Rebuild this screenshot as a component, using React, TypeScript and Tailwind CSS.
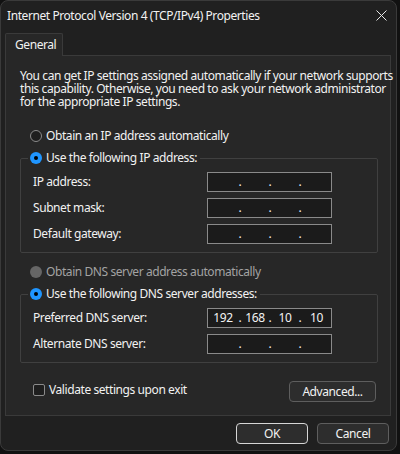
import type { ReactNode } from "react";

const font = { fontFamily: '"Noto Sans", "Segoe UI", sans-serif', letterSpacing: "-0.42px" };

type Segments = [string, string, string, string];

const IpField = ({ value = ["", "", "", ""] }: { value?: Segments }) => (
  <div className="flex h-[20px] w-[125px] items-center border border-[#8a8a8a] bg-[#1b1b1b] text-[12px] leading-none text-[#f2f2f2]">
    <span className="w-[30px] text-center">{value[0]}</span>
    <span className="w-[4px] text-center">.</span>
    <span className="w-[26px] text-center">{value[1]}</span>
    <span className="w-[4px] text-center">.</span>
    <span className="w-[26px] text-center">{value[2]}</span>
    <span className="w-[4px] text-center">.</span>
    <span className="flex-1 text-center">{value[3]}</span>
  </div>
);

const Row = ({ label, value }: { label: string; value?: Segments }) => (
  <div className="flex h-[20px] items-center">
    <span className="w-[186px] pl-[12px]">{label}</span>
    <IpField value={value} />
  </div>
);

type RadioState = "on" | "off" | "disabled";

const Radio = ({ state, children }: { state: RadioState; children: ReactNode }) => (
  <span className="flex h-[14px] items-center gap-[4px]">
    {state === "on" && (
      <span className="flex h-[12px] w-[12px] items-center justify-center rounded-full bg-[#1f95ff]">
        <span className="h-[4px] w-[4px] rounded-full bg-black" />
      </span>
    )}
    {state === "off" && (
      <span className="h-[12px] w-[12px] rounded-full border border-[#8a8a8a] bg-[#1e1e1e]" />
    )}
    {state === "disabled" && <span className="h-[12px] w-[12px] rounded-full bg-[#666666]" />}
    <span className={state === "disabled" ? "text-[#a3a3a3]" : "text-[#f2f2f2]"}>{children}</span>
  </span>
);

const Group = ({ legend, children }: { legend: ReactNode; children: ReactNode }) => (
  <fieldset className="w-[358px] rounded-[2px] border border-[#404040] px-0 pb-[8px]">
    <legend className="ml-[7px] pl-[2px] pr-[3px]">{legend}</legend>
    <div className="mt-[7px] flex flex-col gap-[6px]">{children}</div>
  </fieldset>
);

const Button = ({ children, primary }: { children: ReactNode; primary?: boolean }) => (
  <button
    className={`flex h-[21px] w-full items-center justify-center rounded-[4px] border bg-[#2d2d2d] text-[12px] text-[#f2f2f2] ${
      primary ? "border-[#d6d6d6]" : "border-[#5e5e5e]"
    }`}
  >
    {children}
  </button>
);

export default function App() {
  return (
    <div className="h-[454px] w-[400px] whitespace-nowrap bg-[#111111] text-[12px] text-[#f2f2f2]" style={font}>
      <div className="flex h-[451px] w-[397px] flex-col rounded-[8px] border border-[#3a3a3a] bg-[#202020]">
        {/* title bar */}
        <div className="flex h-[29px] items-center justify-between pl-[6px] pr-[9px]">
          <span className="text-[12px]">Internet Protocol Version 4 (TCP/IPv4) Properties</span>
          <svg width="11" height="11" viewBox="0 0 11 11" className="text-[#e6e6e6]">
            <path d="M0.5 0.5 L10.5 10.5 M10.5 0.5 L0.5 10.5" stroke="currentColor" strokeWidth="1" />
          </svg>
        </div>

        {/* tab strip */}
        <div className="mt-[3px] flex pl-[4px]">
          <div className="relative z-10 -mb-[1px] flex h-[23px] w-[58px] items-center rounded-t-[2px] border border-b-0 border-[#3a3a3a] bg-[#272727] pl-[9px]">
            General
          </div>
        </div>

        {/* tab page */}
        <div className="ml-[4px] flex h-[361px] w-[386px] flex-col border border-[#3a3a3a] bg-[#272727] pl-[14px] pt-[13px]">
          <div className="flex flex-col">
            <span className="h-[13px] leading-[13px]">You can get IP settings assigned automatically if your network supports</span>
            <span className="h-[13px] leading-[13px]">this capability. Otherwise, you need to ask your network administrator</span>
            <span className="h-[13px] leading-[13px]">for the appropriate IP settings.</span>
          </div>

          <div className="ml-[10px] mt-[21px]">
            <Radio state="off">Obtain an IP address automatically</Radio>
          </div>

          <div className="mt-[8px]">
            <Group legend={<Radio state="on">Use the following IP address:</Radio>}>
              <Row label="IP address:" />
              <Row label="Subnet mask:" />
              <Row label="Default gateway:" />
            </Group>
          </div>

          <div className="ml-[10px] mt-[12px]">
            <Radio state="disabled">Obtain DNS server address automatically</Radio>
          </div>

          <div className="mt-[8px]">
            <Group legend={<Radio state="on">Use the following DNS server addresses:</Radio>}>
              <Row label="Preferred DNS server:" value={["192", "168", "10", "10"]} />
              <Row label="Alternate DNS server:" />
            </Group>
          </div>

          <div className="mt-[18px] flex w-[356px] items-start justify-between pl-[13px]">
            <label className="flex items-center gap-[4px]">
              <span className="h-[12px] w-[12px] rounded-[2px] border border-[#8a8a8a] bg-[#1e1e1e]" />
              <span>Validate settings upon exit</span>
            </label>
            <div className="w-[87px]">
              <Button>Advanced...</Button>
            </div>
          </div>
        </div>

        {/* dialog buttons */}
        <div className="mt-[7px] flex justify-end gap-[9px] pr-[7px]">
          <div className="w-[72px]">
            <Button primary>OK</Button>
          </div>
          <div className="w-[72px]">
            <Button>Cancel</Button>
          </div>
        </div>
      </div>
    </div>
  );
}
